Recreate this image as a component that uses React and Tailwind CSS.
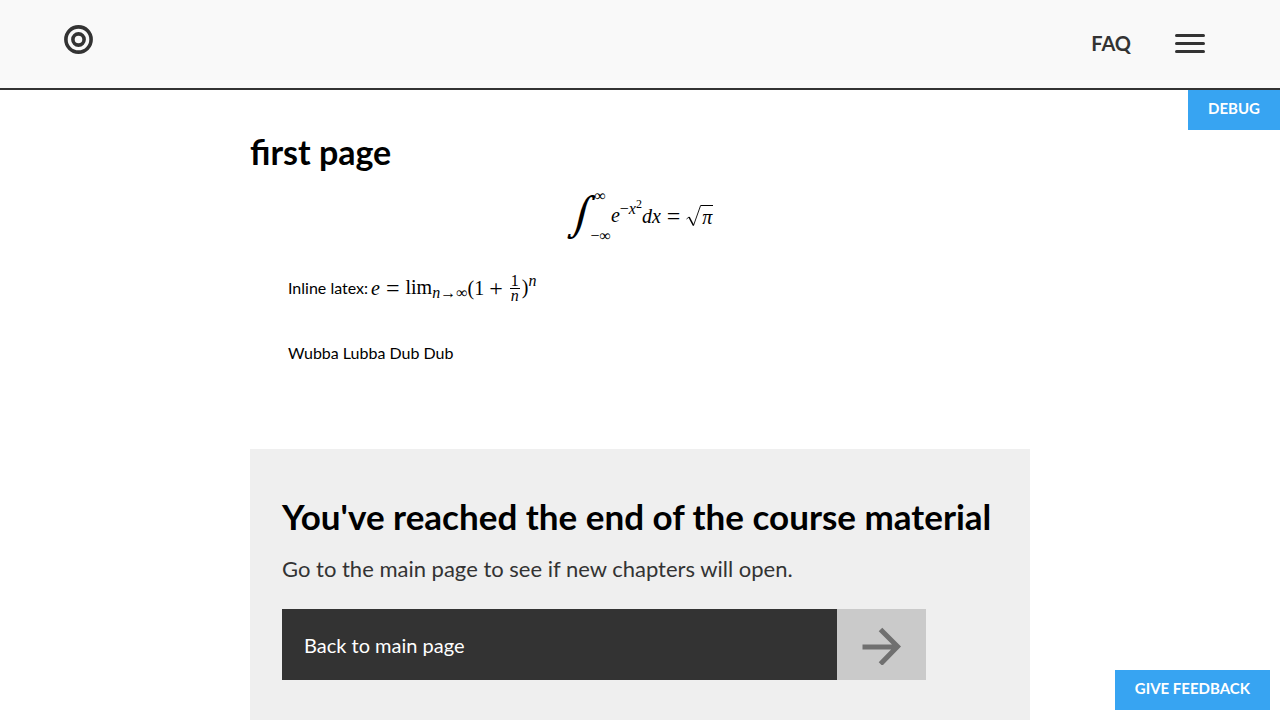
function Logo() {
  return (
    <svg viewBox="0 0 30 30" className="size-[30px]" fill="none" stroke="#333333" aria-hidden="true">
      <circle cx="15.5" cy="15.5" r="12.6" strokeWidth="3.6" />
      <circle cx="15.5" cy="15.5" r="5.6" strokeWidth="3.6" />
    </svg>
  );
}

function Header() {
  return (
    <header className="flex h-[90px] items-start justify-between border-b-2 border-[#333333] bg-[#f9f9f9] pl-[63px] pr-[75px] text-[#333333]">
      <a href="#home" aria-label="Home" className="mt-6">
        <Logo />
      </a>
      <nav className="flex h-[86px] items-center gap-11">
        <a href="#faq" className="text-xl font-bold">
          FAQ
        </a>
        <button type="button" aria-label="Open menu" className="flex w-[30px] flex-col gap-[5px]">
          <span className="h-[3px] w-full rounded-full bg-[#333333]" />
          <span className="h-[3px] w-full rounded-full bg-[#333333]" />
          <span className="h-[3px] w-full rounded-full bg-[#333333]" />
        </button>
      </nav>
    </header>
  );
}

function GaussianIntegral() {
  return (
    <div role="math" className="flex h-[52px] items-center justify-center font-['Liberation_Serif',serif] text-xl leading-6">
      <span className="font-['DejaVu_Math_TeX_Gyre',serif] text-[40px] italic leading-[48px]">∫</span>
      <span className="flex h-[52px] flex-col justify-between text-base leading-3">
        <span className="pl-1">∞</span>
        <span>−∞</span>
      </span>
      <span className="italic">
        e
        <sup className="text-base">
          <span className="not-italic">−</span>x<sup className="text-xs not-italic">2</sup>
        </sup>
      </span>
      <span className="italic">dx</span>
      <span className="mx-[6px] text-2xl leading-6">=</span>
      <span className="flex">
        <svg viewBox="0 0 15 22" className="h-[22px] w-[15px]" fill="none" stroke="#000000" aria-hidden="true">
          <path d="M0.5 14L3 12" strokeWidth="0.8" />
          <path d="M3 12L7.5 20.5" strokeWidth="1.6" />
          <path d="M7.5 20.5L14.6 0.5H15" strokeWidth="0.9" />
        </svg>
        <span className="border-t border-black px-px italic leading-[22px]">π</span>
      </span>
    </div>
  );
}

function EulerLimit() {
  return (
    <span role="math" className="flex items-center font-['Liberation_Serif',serif] text-xl leading-6">
      <span className="italic">e</span>
      <span className="mx-[6px] text-2xl leading-6">=</span>
      <span>
        lim
        <sub className="text-base"><i>n</i>→∞</sub>
      </span>
      <span>(1</span>
      <span className="mx-[5px] text-2xl leading-6">+</span>
      <span className="flex flex-col px-[2px] text-center text-base leading-[14px]">
        <span className="border-b border-black px-px">1</span>
        <span className="italic">n</span>
      </span>
      <span>
        )<sup className="text-base italic">n</sup>
      </span>
    </span>
  );
}

export default function App() {
  return (
    <div className="relative min-h-screen bg-white font-['Lato',sans-serif] text-black">
      <Header />
      <button type="button" className="absolute right-0 top-[90px] h-10 bg-[#37a4f2] px-5 pb-1 text-[15px] font-bold text-white">
        DEBUG
      </button>
      <main className="mx-auto max-w-[780px] pt-10">
        <h1 className="text-[34px] font-bold leading-[44px]">first page</h1>
        <div className="mt-4 h-[60px]">
          <GaussianIntegral />
        </div>
        <p className="mt-5 flex h-[36px] items-center gap-[3px] pl-[38px]">
          Inline latex: <EulerLimit />
        </p>
        <p className="mt-[35px] pl-[38px] leading-6">Wubba Lubba Dub Dub</p>
        <section className="mt-[84px] bg-[#efefef] px-8 pb-16 pt-[43px]">
          <h2 className="text-[35px] font-bold leading-[48px]">You&apos;ve reached the end of the course material</h2>
          <p className="mt-[11px] text-[22px] leading-[36px] text-[#333333]">Go to the main page to see if new chapters will open.</p>
          <a href="#main" className="mt-[22px] flex h-[71px] w-[90%] bg-[#333333] text-xl text-white">
            <span className="flex flex-1 items-center px-[22px]">Back to main page</span>
            <span className="flex w-[89px] items-center justify-center bg-[#cacaca]">
              <svg viewBox="0 0 40 40" className="size-10" fill="none" stroke="#707070" strokeWidth="5" aria-hidden="true">
                <path d="M0.5 22.5H35M18.5 5L35.5 22L18.5 39.5" transform="translate(0 -0.5)" />
              </svg>
            </span>
          </a>
        </section>
      </main>
      <button type="button" className="fixed bottom-[10px] right-[10px] h-10 bg-[#37a4f2] px-5 pb-1 text-[15px] font-bold text-white">
        GIVE FEEDBACK
      </button>
    </div>
  );
}
